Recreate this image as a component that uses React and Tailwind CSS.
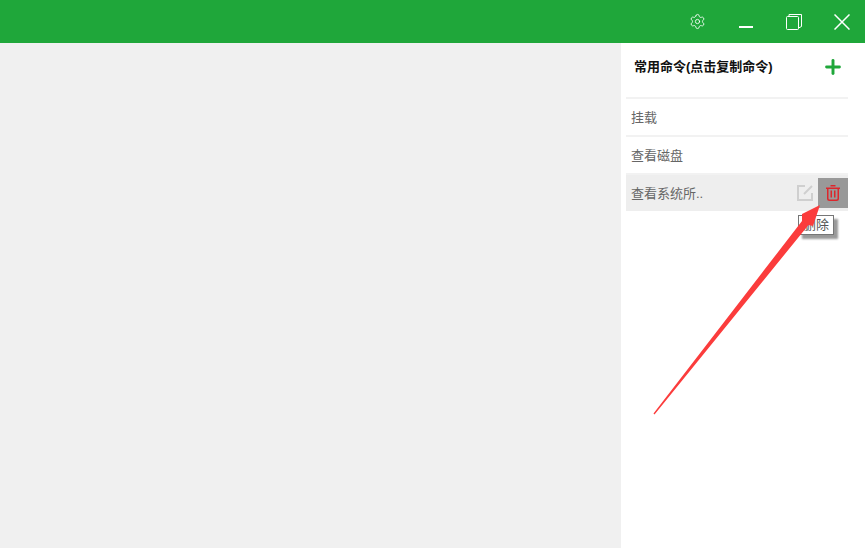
import { Plus, Settings } from 'lucide-react';

const commands = ['挂载', '查看磁盘'];

export default function App() {
  return (
    <div className="relative w-[865px] h-[548px] overflow-hidden flex flex-col bg-[#f0f0f0] font-['Liberation_Sans','Noto_Sans_CJK_SC',sans-serif]">
      {/* Title bar */}
      <div className="h-[43px] shrink-0 flex items-center justify-end bg-[#1fa73a] text-white">
        <Settings size={17} strokeWidth={1.2} className="mr-[33px]" />
        <div className="w-[14px] h-[2px] bg-white mt-[11px] mr-[33px]" />
        <svg width="16" height="16" viewBox="0 0 16 16" fill="none" stroke="white" strokeWidth="1" className="mr-[32px]">
          <rect x="0.5" y="2.5" width="12" height="13" rx="1" />
          <path d="M3 2.5 V0.5 H15.5 V12.5 L12.5 14" />
        </svg>
        <svg width="16" height="16" viewBox="0 0 16 16" fill="none" stroke="white" strokeWidth="1.5" className="mr-[15px]">
          <path d="M0.5 0.5 L15.5 15.5 M15.5 0.5 L0.5 15.5" />
        </svg>
      </div>

      <div className="flex-1 flex justify-end">
        {/* Commands panel */}
        <div className="w-[244px] bg-white pl-[5px] pr-[17px]">
          <div className="h-[56px] flex items-center justify-between border-b-2 border-[#f2f2f2] pb-[7px] pl-[8px] pr-[4px]">
            <span className="text-[13px] font-bold text-[#111]">常用命令(点击复制命令)</span>
            <Plus size={22} strokeWidth={3.2} className="text-[#1fa73a]" />
          </div>
          {commands.map((c) => (
            <div key={c} className="h-[38px] flex items-center pl-[5px] pt-[2px] text-[13px] text-[#666] border-b-2 border-[#f2f2f2]">
              {c}
            </div>
          ))}
          <div className="h-[36px] flex items-center pl-[5px] bg-[#eeeeee] text-[13px] text-[#666]">
            <span className="flex-1 pt-[2px]">查看系统所..</span>
            <svg width="18" height="18" viewBox="0 0 18 18" fill="none" stroke="#cfcfcf" strokeWidth="2" className="mr-[4px]">
              <path d="M9 2 H2 V16 H16 V9" />
              <path d="M8 10 L16 2" />
            </svg>
            <div className="w-[30px] h-[30px] flex items-center justify-center bg-[#999]">
              <svg width="14" height="16" viewBox="0 0 14 16" fill="none" stroke="#dd262c" strokeWidth="1.5">
                <path d="M4.5 0.75 H9.5" />
                <path d="M0 3.25 H14" />
                <path d="M1.75 3.25 V13.5 Q1.75 15.25 3.5 15.25 H10.5 Q12.25 15.25 12.25 13.5 V3.25" />
                <path d="M5.25 5.5 V12.5 M8.75 5.5 V12.5" />
              </svg>
            </div>
          </div>
        </div>
      </div>

      {/* Tooltip */}
      <div className="absolute left-[798px] top-[215px] w-[36px] h-[20px] flex items-center justify-center border border-[#767676] bg-white text-[13px] text-[#555] shadow-[4px_4px_2px_#999]">
        删除
      </div>

      {/* Red annotation arrow */}
      <svg className="absolute inset-0" width="865" height="548" viewBox="0 0 865 548">
        <path d="M820 205 L813 226 L808.5 225 L654.5 414.5 L653.5 413.5 L802 221 L802 214 Z" fill="#fb3c3c" />
      </svg>
    </div>
  );
}
